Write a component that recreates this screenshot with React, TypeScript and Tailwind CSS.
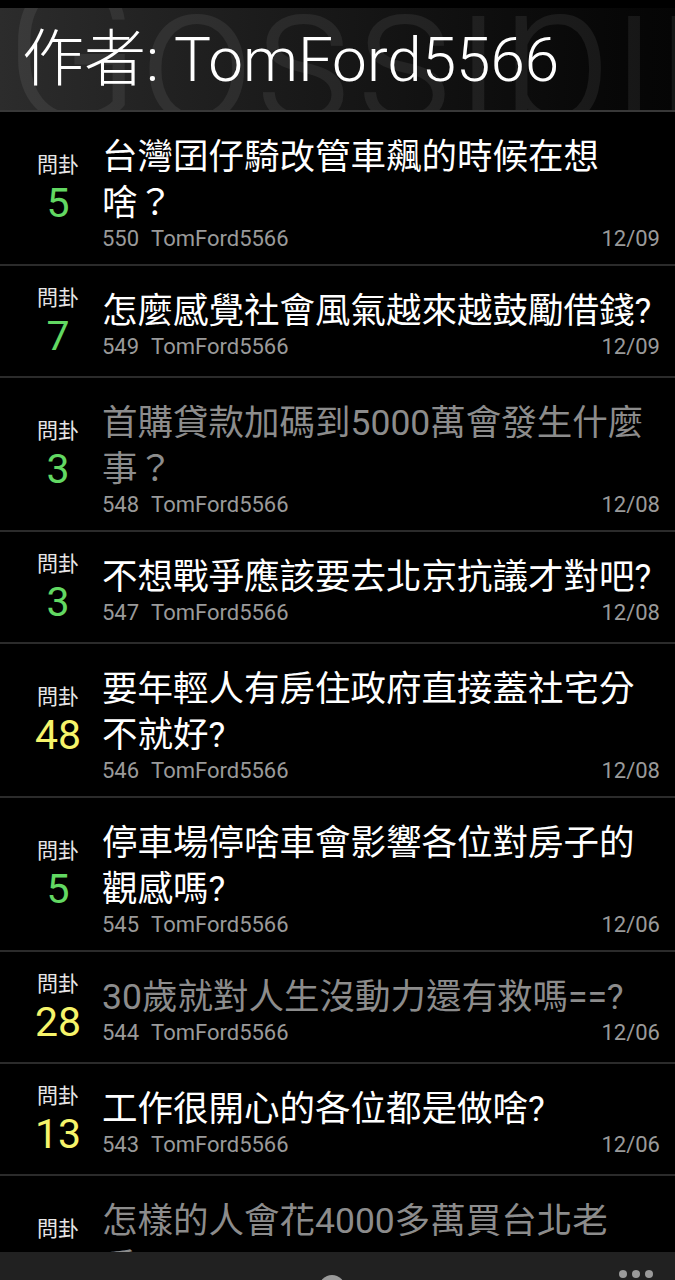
const posts = [
  { n: 5, title: "台灣囝仔騎改管車飆的時候在想啥？", id: 550, date: "12/09", read: false },
  { n: 7, title: "怎麼感覺社會風氣越來越鼓勵借錢?", id: 549, date: "12/09", read: false },
  { n: 3, title: "首購貸款加碼到5000萬會發生什麼事？", id: 548, date: "12/08", read: true },
  { n: 3, title: "不想戰爭應該要去北京抗議才對吧?", id: 547, date: "12/08", read: false },
  { n: 48, title: "要年輕人有房住政府直接蓋社宅分不就好?", id: 546, date: "12/08", read: false },
  { n: 5, title: "停車場停啥車會影響各位對房子的觀感嗎?", id: 545, date: "12/06", read: false },
  { n: 28, title: "30歲就對人生沒動力還有救嗎==?", id: 544, date: "12/06", read: true },
  { n: 13, title: "工作很開心的各位都是做啥?", id: 543, date: "12/06", read: false },
  { n: 12, title: "怎樣的人會花4000多萬買台北老房？", id: 542, date: "12/05", read: true },
];

function PostRow({ p }: { p: (typeof posts)[number] }) {
  return (
    <div className="flex min-h-[112px] border-b-2 border-[#2b2b2b]">
      {/* left: category + push count */}
      <div className="ml-[18px] mr-[4px] w-[80px] flex flex-col items-center justify-center">
        <div className="text-[21px] leading-[26px] text-[#e6e6e6]">問卦</div>
        <div
          className={
            p.n >= 10
              ? "mt-[3px] text-[41px] leading-[44px] text-[#f6f46a]"
              : "mt-[3px] text-[41px] leading-[44px] text-[#62d862]"
          }
        >
          {p.n}
        </div>
      </div>

      {/* right: title + meta */}
      <div className="flex-1 min-w-0 pt-[22px] pb-[12px] pr-[15px]">
        <div
          className={
            p.read
              ? "mr-[-4px] text-[35.5px] leading-[46px] text-[#8c8c8c]"
              : "mr-[-4px] text-[35.5px] leading-[46px] text-white"
          }
        >
          {p.title}
        </div>
        <div className="flex justify-between text-[22px] leading-[26px] text-[#9a9a9a]">
          <div>
            <span>{p.id}</span>
            <span className="ml-[12px]">TomFord5566</span>
          </div>
          <span>{p.date}</span>
        </div>
      </div>
    </div>
  );
}

export default function App() {
  return (
    <div className="relative w-full h-[1280px] overflow-hidden bg-black pt-[8px] font-['Roboto','Noto_Sans_CJK_TC',sans-serif]">
      {/* Header */}
      <header className="relative h-[104px] overflow-hidden border-b-2 border-[#383838] bg-gradient-to-r from-[#2c2c2c] to-[#050505] flex items-center">
        <div className="absolute left-[4px] top-[-54px] text-[200px] font-light leading-none whitespace-nowrap text-white/[0.07] pointer-events-none">
          Gossiping
        </div>
        <h1 className="relative pl-[22px] pt-[2px] text-[62px] font-light leading-none text-white font-['Roboto_Light','Roboto','Noto_Sans_CJK_TC_Light','Noto_Sans_CJK_TC',sans-serif]">
          作者: TomFord5566
        </h1>
      </header>

      {/* List */}
      <div>
        {posts.map((p) => (
          <PostRow key={p.id} p={p} />
        ))}
      </div>

      {/* Bottom bar */}
      <div className="absolute bottom-0 left-0 right-0 h-[28px] overflow-hidden bg-[#212121]">
        <div className="absolute left-[319px] top-[23px] w-[26px] h-[26px] rounded-full bg-[#9a9a9a]" />
        <div className="absolute right-[22px] top-[18px] flex gap-[5px]">
          <span className="w-[8px] h-[8px] rounded-full bg-[#9a9a9a]" />
          <span className="w-[8px] h-[8px] rounded-full bg-[#9a9a9a]" />
          <span className="w-[8px] h-[8px] rounded-full bg-[#9a9a9a]" />
        </div>
      </div>
    </div>
  );
}
